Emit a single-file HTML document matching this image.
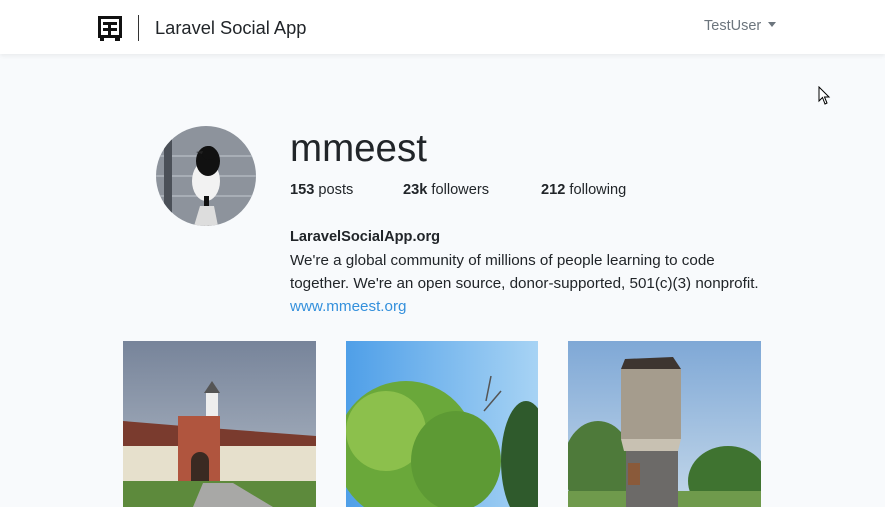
<!DOCTYPE html>
<html><head><meta charset="utf-8"><style>
*{margin:0;padding:0;box-sizing:border-box}
body{width:885px;height:507px;overflow:hidden;background:#f8fafc;font-family:"Liberation Sans",sans-serif;color:#212529;position:relative}
.nav{position:absolute;left:0;top:0;width:885px;height:54px;background:#fff;box-shadow:0 2px 4px rgba(0,0,0,.06)}
.brand{position:absolute;left:155px;top:17px;font-size:18.3px;color:#212529}
.sep{position:absolute;left:138px;top:15px;width:1px;height:26px;background:#333}
.user{position:absolute;left:704px;top:18px;font-size:14.5px;color:#6c757d}
.user:after{content:"";display:inline-block;margin-left:7px;vertical-align:3px;border-top:5px solid #6c757d;border-left:4px solid transparent;border-right:4px solid transparent}
.name{position:absolute;left:290px;top:127px;font-size:38.5px;font-weight:300;color:#212529}
.stats{position:absolute;top:182px;font-size:14.6px}
.t{position:absolute;left:290px;font-size:15.2px;line-height:23px;white-space:nowrap}
.ph{position:absolute;top:341px;height:166px;overflow:hidden}
</style></head><body>
<div class="nav">
<svg style="position:absolute;left:97px;top:14px" width="27" height="28" viewBox="0 0 27 28"><g fill="#111"><rect x="1" y="2" width="3" height="22"/><rect x="1" y="2" width="24" height="3"/><rect x="22" y="2" width="3" height="22"/><rect x="6" y="8" width="14" height="3"/><rect x="6" y="14" width="14" height="3"/><rect x="11" y="8" width="3" height="16"/><rect x="1" y="21" width="24" height="3"/><rect x="3" y="24" width="4" height="3"/><rect x="18" y="24" width="5" height="3"/></g></svg>
<div class="sep"></div>
<div class="brand">Laravel Social App</div>
<div class="user">TestUser</div>
</div>
<svg style="position:absolute;left:818px;top:86px" width="14" height="20" viewBox="0 0 14 20"><path d="M1 1 L1 15 L4.5 11.5 L7 18 L9 17 L6.5 11 L11 11 Z" fill="#fff" stroke="#000" stroke-width="1"/></svg>
<svg style="position:absolute;left:156px;top:126px" width="100" height="100" viewBox="0 0 100 100"><defs><clipPath id="c"><circle cx="50" cy="50" r="50"/></clipPath></defs><g clip-path="url(#c)"><rect width="100" height="100" fill="#8d939c"/><g stroke="#a8aeb6" stroke-width="2"><line x1="0" y1="30" x2="100" y2="30"/><line x1="0" y1="50" x2="100" y2="50"/><line x1="0" y1="70" x2="100" y2="70"/></g><rect x="8" y="0" width="8" height="100" fill="#4b5058"/><ellipse cx="50" cy="55" rx="14" ry="20" fill="#f2f2f2"/><ellipse cx="52" cy="35" rx="12" ry="15" fill="#111"/><circle cx="53" cy="27" r="7" fill="#111"/><path d="M40 26 L47 25 L46 28Z" fill="#222"/><rect x="48" y="70" width="5" height="30" fill="#111"/><path d="M38 100 L44 80 L58 80 L62 100Z" fill="#ddd"/></g></svg>
<div class="name">mmeest</div>
<div class="stats" style="left:290px"><b>153</b> posts</div>
<div class="stats" style="left:403px"><b>23k</b> followers</div>
<div class="stats" style="left:541px"><b>212</b> following</div>
<div class="t" style="top:226px;font-weight:bold;font-size:14.6px">LaravelSocialApp.org</div>
<div class="t" style="top:249px">We're a global community of millions of people learning to code</div>
<div class="t" style="top:272px">together. We're an open source, donor-supported, 501(c)(3) nonprofit.</div>
<div class="t" style="top:295px;color:#3490dc">www.mmeest.org</div>
<svg class="ph" style="left:123px" width="193" height="166" viewBox="0 0 193 166"><defs><linearGradient id="s1" x1="0" y1="0" x2="0" y2="1"><stop offset="0" stop-color="#77849a"/><stop offset="1" stop-color="#b3bcc8"/></linearGradient></defs><rect width="193" height="166" fill="url(#s1)"/><path d="M0 80 L60 85 L193 95 L193 115 L0 115Z" fill="#7a3b2e"/><rect x="0" y="105" width="193" height="45" fill="#e6e0cc"/><rect x="55" y="75" width="42" height="75" fill="#b0553e"/><path d="M80 142 L80 120 A9 9 0 0 1 98 120 L98 142Z" fill="#3a2a22" transform="translate(-12,0)"/><rect x="83" y="50" width="12" height="25" fill="#eee"/><path d="M81 52 L89 40 L97 52Z" fill="#555"/><rect x="0" y="140" width="193" height="26" fill="#5d8a3c"/><path d="M70 166 L80 142 L110 142 L150 166Z" fill="#a8a8a6"/></svg>
<svg class="ph" style="left:346px" width="192" height="166" viewBox="0 0 192 166"><defs><linearGradient id="s2" x1="0" y1="0" x2="1" y2="0"><stop offset="0" stop-color="#4f9fe8"/><stop offset="1" stop-color="#a7d3f4"/></linearGradient></defs><rect width="192" height="166" fill="url(#s2)"/><ellipse cx="60" cy="110" rx="70" ry="70" fill="#6aa83a"/><ellipse cx="40" cy="90" rx="40" ry="40" fill="#8cc04c"/><ellipse cx="110" cy="120" rx="45" ry="50" fill="#5d9a34"/><ellipse cx="180" cy="120" rx="25" ry="60" fill="#2f5a2c"/><path d="M140 60 L145 35 M138 70 L155 50" stroke="#555" stroke-width="1.5"/></svg>
<svg class="ph" style="left:568px" width="193" height="166" viewBox="0 0 193 166"><defs><linearGradient id="s3" x1="0" y1="0" x2="0" y2="1"><stop offset="0" stop-color="#7fa8d6"/><stop offset="1" stop-color="#c4d8ea"/></linearGradient></defs><rect width="193" height="166" fill="url(#s3)"/><ellipse cx="30" cy="125" rx="35" ry="45" fill="#4e7a3a"/><ellipse cx="160" cy="140" rx="40" ry="35" fill="#3f7330"/><rect x="0" y="150" width="193" height="16" fill="#6f9a4c"/><path d="M53 28 L57 18 L105 16 L113 28Z" fill="#3d3530"/><rect x="53" y="28" width="60" height="70" fill="#a59c8d"/><path d="M53 98 L113 98 L110 110 L56 110Z" fill="#c8c1b2"/><rect x="58" y="110" width="52" height="56" fill="#6c6a68"/><rect x="60" y="122" width="12" height="22" fill="#8a5a3a"/></svg>
</body></html>
